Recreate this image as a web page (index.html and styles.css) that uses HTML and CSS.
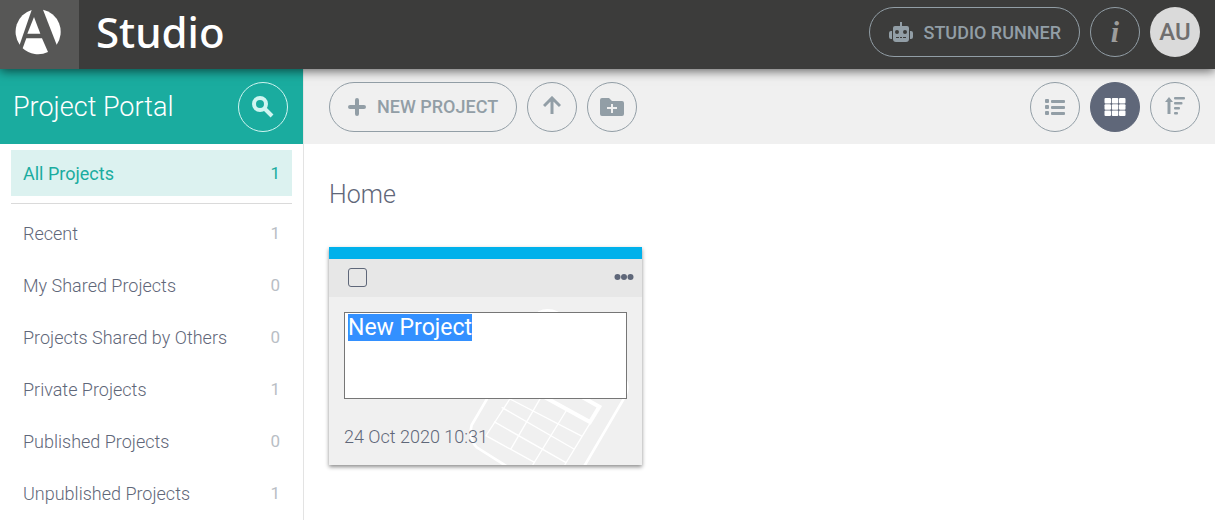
FILE: index.html
```html
<!DOCTYPE html>
<html lang="en">
<head>
    <meta charset="UTF-8">
    <meta name="viewport" content="width=device-width, initial-scale=1.0">
    <title>Studio - Project Portal</title>
    <link rel="stylesheet" href="styles.css">
</head>
<body>
    <header class="topbar">
        <a class="logo" href="#" aria-label="Home">
            <svg width="46" height="46" viewBox="0 0 138 138" fill="#fff">
                <path d="M50 3A68 68 0 0 0 14 107Z"/>
                <path d="M84 2A68 68 0 0 1 125 107Z"/>
                <path d="M57 24L76 74H37Z"/>
                <path d="M34 88H81L99 129A68 68 0 0 1 23 118Z"/>
            </svg>
        </a>
        <span class="brand">Studio</span>
        <div class="topbar-actions">
            <button type="button" class="pill runner">
                <svg width="26" height="20" viewBox="0 0 26 20" fill="currentColor">
                    <path fill-rule="evenodd" d="M12 0h2v4h5a2 2 0 0 1 2 2v11a3 3 0 0 1-3 3H8a3 3 0 0 1-3-3V6a2 2 0 0 1 2-2h5zM9 8a2 2 0 1 0 0 4 2 2 0 0 0 0-4zM17 8a2 2 0 1 0 0 4 2 2 0 0 0 0-4zM8 15v1h3v-1zM12 15v1h2v-1zM15 15v1h3v-1z"/>
                    <path d="M4 9v8H3a2 2 0 0 1-2-2v-4a2 2 0 0 1 2-2zM22 9v8h1a2 2 0 0 0 2-2v-4a2 2 0 0 0-2-2z"/>
                </svg>
                STUDIO RUNNER
            </button>
            <button type="button" class="round info" aria-label="Info">i</button>
            <button type="button" class="round avatar">AU</button>
        </div>
    </header>

    <div class="layout">
        <aside class="sidebar">
            <div class="sidebar-header">
                <h1>Project Portal</h1>
                <button type="button" class="round search" aria-label="Search">
                    <svg width="22" height="22" viewBox="0 0 22 22" fill="none" stroke="currentColor">
                        <circle cx="8" cy="8" r="6" stroke-width="4"/>
                        <path d="M13 13l7 7" stroke-width="4"/>
                    </svg>
                </button>
            </div>
            <nav class="folders">
                <a class="active" href="#">All Projects <span>1</span></a>
                <hr>
                <a href="#">Recent <span>1</span></a>
                <a href="#">My Shared Projects <span>0</span></a>
                <a href="#">Projects Shared by Others <span>0</span></a>
                <a href="#">Private Projects <span>1</span></a>
                <a href="#">Published Projects <span>0</span></a>
                <a href="#">Unpublished Projects <span>1</span></a>
            </nav>
        </aside>

        <main class="content">
            <div class="toolbar">
                <button type="button" class="pill new-project">
                    <svg width="18" height="18" viewBox="0 0 18 18" fill="none" stroke="currentColor" stroke-width="4" stroke-linecap="round">
                        <path d="M9 2v14M2 9h14"/>
                    </svg>
                    NEW PROJECT
                </button>
                <button type="button" class="round" aria-label="Upload">
                    <svg width="18" height="22" viewBox="0 0 18 22" fill="none" stroke="currentColor" stroke-width="3">
                        <path d="M9 18V3M1 10l8-8 8 8"/>
                    </svg>
                </button>
                <button type="button" class="round" aria-label="New folder">
                    <svg width="24" height="20" viewBox="0 0 24 20">
                        <path fill="currentColor" d="M2 1h7l3 3h10a2 2 0 0 1 2 2v11a2 2 0 0 1-2 2H2a2 2 0 0 1-2-2V3a2 2 0 0 1 2-2z"/>
                        <path stroke="#f0f0f0" stroke-width="2" d="M12 7v9M7 11h10"/>
                    </svg>
                </button>
                <div class="view-actions">
                    <button type="button" class="round" aria-label="List view">
                        <svg width="20" height="18" viewBox="0 0 20 18" fill="currentColor">
                            <rect width="4" height="4" y="1" rx="1"/><rect width="14" height="3" x="6" y="2" rx="1"/>
                            <rect width="4" height="4" y="7" rx="1"/><rect width="14" height="3" x="6" y="8" rx="1"/>
                            <rect width="4" height="4" y="13" rx="1"/><rect width="14" height="3" x="6" y="14" rx="1"/>
                        </svg>
                    </button>
                    <button type="button" class="round selected" aria-label="Grid view">
                        <svg width="22" height="20" viewBox="0 0 22 20" fill="currentColor">
                            <rect width="6.5" height="5.5" x="0.5" y="1" rx="1"/><rect width="6.5" height="5.5" x="7.8" y="1" rx="1"/><rect width="6.5" height="5.5" x="15" y="1" rx="1"/>
                            <rect width="6.5" height="5.5" x="0.5" y="7.3" rx="1"/><rect width="6.5" height="5.5" x="7.8" y="7.3" rx="1"/><rect width="6.5" height="5.5" x="15" y="7.3" rx="1"/>
                            <rect width="6.5" height="5.5" x="0.5" y="13.6" rx="1"/><rect width="6.5" height="5.5" x="7.8" y="13.6" rx="1"/><rect width="6.5" height="5.5" x="15" y="13.6" rx="1"/>
                        </svg>
                    </button>
                    <button type="button" class="round" aria-label="Sort">
                        <svg width="20" height="22" viewBox="0 0 20 22" fill="currentColor">
                            <path d="M4 1l4 5H5.5v12h-3V6H0z"/>
                            <rect x="9" y="1" width="11" height="2.5" rx="1"/><rect x="9" y="6" width="8.5" height="2.5" rx="1"/>
                            <rect x="9" y="11" width="6" height="2.5" rx="1"/><rect x="9" y="16" width="4" height="2.5" rx="1"/>
                        </svg>
                    </button>
                </div>
            </div>

            <section class="projects">
                <h2>Home</h2>
                <article class="card">
                    <div class="card-header">
                        <input type="checkbox" aria-label="Select project">
                        <button type="button" class="more" aria-label="More">
                            <svg width="20" height="6" viewBox="0 0 20 6" fill="currentColor">
                                <circle cx="3.5" cy="3" r="3"/><circle cx="10" cy="3" r="3"/><circle cx="16.5" cy="3" r="3"/>
                            </svg>
                        </button>
                    </div>
                    <div class="card-body">
                        <svg class="calculator" viewBox="27 171 939 504" preserveAspectRatio="xMaxYMax slice" fill="none" stroke="#fff">
                            <path stroke-width="8" d="M655 218Q683 204 712 218L900 400Q935 430 915 470L792 680M505 470L455 555Q445 595 470 622L562 680"/>
                            <path stroke-width="4" d="M574 470L498 587L645 668M570 477L788 590M545 502L762 627M522 545L738 668M664 470L572 628M740 510L638 675M810 550L734 675"/>
                            <path stroke-width="12" d="M672 470L810 546L838 500L785 470"/>
                        </svg>
                        <textarea id="projectName" rows="3" aria-label="Project name">New Project</textarea>
                        <time datetime="2020-10-24T10:31">24 Oct 2020 10:31</time>
                    </div>
                </article>
            </section>
        </main>
    </div>

    <script>
        // Start with the name ready to be replaced
        const projectName = document.getElementById('projectName');
        projectName.focus();
        projectName.select();
    </script>
</body>
</html>
```
FILE: styles.css
```css
* {
    box-sizing: border-box;
}
body {
    font-family: Roboto, "Liberation Sans", sans-serif;
    margin: 0;
    height: 100vh;
    display: flex;
    flex-direction: column;
    color: #5f6779;
    background: #fff;
    overflow: hidden;
}
button {
    font-family: inherit;
    cursor: pointer;
}
.topbar {
    display: flex;
    align-items: center;
    flex-shrink: 0;
    height: 69px;
    padding-right: 15px;
    background: #3c3c3b;
    box-shadow: 0 2px 10px rgba(0, 0, 0, 0.6);
    position: relative; /* Keeps the shadow above the panels */
    z-index: 1;
}
.logo {
    display: flex;
    width: 79px;
    height: 69px;
    padding: 9px 0 0 15px;
    background: #575756;
}
.brand {
    margin-left: 17px;
    padding-bottom: 6px;
    font-family: "Noto Sans", sans-serif;
    font-size: 42px;
    font-weight: 500;
    line-height: 60px;
    color: #fff;
}
.topbar-actions {
    display: flex;
    gap: 10px;
    margin-left: auto;
    padding-bottom: 5px;
}
.pill, .round {
    display: flex;
    align-items: center;
    justify-content: center;
    height: 50px;
    padding: 0;
    border: 1px solid #929ea6;
    border-radius: 25px;
    background: none;
    color: #929ea6;
}
.pill {
    padding: 0 18px;
    font-size: 18px;
    font-weight: 500;
}
.round {
    width: 50px;
}
.runner {
    gap: 9px;
}
.info {
    font-family: "Liberation Serif", serif;
    font-size: 30px;
    font-style: italic;
    font-weight: bold;
    color: #9d9d9c;
}
.avatar {
    border: none;
    background: #dadada;
    color: #706f6f;
    font-size: 24px;
    font-weight: 500;
}
.layout {
    display: flex;
    flex: 1;
}
.sidebar {
    width: 304px;
    flex-shrink: 0;
    border-right: 1px solid #e3e3e3;
}
.sidebar-header {
    display: flex;
    align-items: center;
    justify-content: space-between;
    height: 75px;
    padding: 0 15px 0 13px;
    background: #1aac9f;
    color: #fff;
}
h1 {
    margin: 0;
    font-size: 27px;
    font-weight: 300;
}
.search {
    border-color: #d0f5f1;
    color: #d0f5f1;
}
.folders {
    padding: 6px 11px;
}
.folders a {
    display: flex;
    align-items: center;
    justify-content: space-between;
    height: 52px;
    padding: 0 12px;
    color: #5f6779;
    font-size: 18px;
    font-weight: 300;
    text-decoration: none;
}
.folders span {
    font-size: 17px;
    font-weight: 400;
    color: #b9bec5;
}
.folders .active {
    height: 46px;
    background: #dcf2f0;
    color: #1aac9f;
    font-weight: 400;
}
.folders .active span {
    color: #1aac9f;
}
.folders hr {
    height: 1px;
    margin: 7px 0 3px;
    border: none;
    background: #dadada;
}
.content {
    flex: 1;
}
.toolbar {
    display: flex;
    align-items: center;
    gap: 10px;
    height: 75px;
    padding: 0 15px 0 25px;
    background: #f0f0f0;
}
.new-project {
    gap: 11px;
}
.view-actions {
    display: flex;
    gap: 10px;
    margin-left: auto;
}
.selected {
    border-color: #5f6779;
    background: #5f6779;
    color: #fff;
}
.projects {
    padding: 34px 25px;
}
h2 {
    margin: 0 0 35px;
    font-size: 25px;
    line-height: 34px;
    font-weight: 300;
}
.card {
    width: 313px;
    border-top: 12px solid #00b1eb;
    background: #f0f0f0;
    box-shadow: 0 2px 4px rgba(0, 0, 0, 0.45);
}
.card-header {
    display: flex;
    align-items: center;
    justify-content: space-between;
    height: 38px;
    padding: 0 8px 2px 19px;
    background: #e7e7e7;
}
.card-header input {
    appearance: none;
    width: 19px;
    height: 19px;
    margin: 0;
    border: 1px solid #5f6779;
    border-radius: 3px;
}
.more {
    display: flex;
    padding: 0;
    border: none;
    background: none;
    color: #5f6779;
}
.card-body {
    position: relative;
    padding: 15px 15px 16px;
}
.calculator {
    position: absolute;
    inset: 0;
    width: 100%;
    height: 100%;
}
textarea {
    display: block;
    position: relative; /* Sits over the drawing */
    width: 100%;
    height: 87px;
    margin-bottom: 25px;
    padding: 1px 3px;
    border: 1px solid #767676;
    outline: none;
    resize: none;
    background: #fff;
    color: #5f6779;
    font-family: inherit;
    font-size: 23px;
    line-height: 27px;
}
textarea::selection {
    background: #3390ff;
    color: #fff;
}
time {
    display: block;
    position: relative;
    font-size: 18px;
    line-height: 25px;
    font-weight: 300;
}
```
